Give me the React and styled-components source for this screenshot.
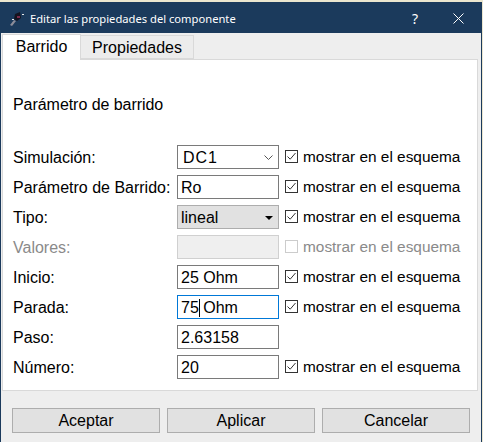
import React from 'react';
import styled, { createGlobalStyle } from 'styled-components';

const GlobalStyle = createGlobalStyle`
  html, body { margin: 0; padding: 0; background: #ebe6cf; }
  body { width: 483px; height: 442px; overflow: hidden; font-family: "Liberation Sans", Arial, sans-serif; }
`;

const Dialog = styled.div`
  margin-top: 2px;
  width: 482px;
  height: 440px;
  box-sizing: border-box;
  border-left: 1px solid #1b3a5c;
  border-right: 1px solid #1b3a5c;
  background: #eeeeee;
  display: flex;
  flex-direction: column;
`;

const TitleBar = styled.div`
  height: 31px;
  flex: none;
  background: #1b3a5c;
  color: #fff;
  display: flex;
  align-items: center;
  padding: 2px 17px 0 8px;
  box-sizing: border-box;
  font-family: "Noto Sans", sans-serif;
  font-size: 11.2px;
`;

const TitleText = styled.span`
  margin-left: 5px;
  flex: 1;
`;

const HelpMark = styled.span`
  font-size: 14px;
  margin-right: 35px;
`;

const TabStrip = styled.div`
  display: flex;
  align-items: flex-end;
  height: 26px;
  flex: none;
  padding-left: 1px;
`;

const Tab = styled.div`
  box-sizing: border-box;
  font-size: 16px;
  text-align: center;
  color: #000;
  width: ${p => p.$width}px;
  height: ${p => (p.$active ? 26 : 24)}px;
  background: ${p => (p.$active ? '#fff' : '#ececec')};
  border: 1px solid #d9d9d9;
  border-bottom: ${p => (p.$active ? 'none' : '1px solid #d9d9d9')};
  border-left: ${p => (p.$active ? '1px solid #d9d9d9' : 'none')};
  line-height: 24px;
  position: relative;
  z-index: ${p => (p.$active ? 1 : 0)};
  margin-bottom: ${p => (p.$active ? -1 : 0)}px;
`;

const Pane = styled.div`
  box-sizing: border-box;
  margin: 0 3px 0 1px;
  height: 332px;
  flex: none;
  background: #fff;
  border: 1px solid #d9d9d9;
  padding: 0 10px;
`;

const Heading = styled.div`
  font-size: 16px;
  letter-spacing: -0.05px;
  color: #000;
  margin: 36px 0 31px;
  line-height: 18px;
`;

const Form = styled.div`
  display: grid;
  grid-template-columns: 164px 102px 1fr;
  grid-auto-rows: 24px;
  row-gap: 6px;
  align-items: center;
  font-size: 16px;
`;

const Label = styled.div`
  align-self: start;
  padding-top: 1px;
  line-height: 23px;
  white-space: nowrap;
  color: ${p => (p.$disabled ? '#8a8a8a' : '#000')};
`;

const Field = styled.div`
  box-sizing: border-box;
  height: 24px;
  display: flex;
  align-items: center;
  padding: 1px 0 0 3px;
  background: ${p => (p.$disabled ? '#efefef' : '#fff')};
  border: 1px solid ${p => (p.$focus ? '#0078d7' : p.$disabled ? '#d0d0d0' : '#7a7a7a')};
  font-size: 16px;
  white-space: pre;
`;

const Caret = styled.span`
  display: inline-block;
  width: 1px;
  height: 18px;
  background: #000;
  margin: 0 -1px 0 0;
`;

const ComboFlat = styled(Field)`
  justify-content: space-between;
  padding: 1px 5px 0 5px;
  letter-spacing: 1px;
`;

const ComboRaised = styled(Field)`
  justify-content: space-between;
  padding: 1px 5px 0 3px;
  background: #e1e1e1;
  border-color: #adadad;
`;

const Arrow = styled.span`
  width: 0;
  height: 0;
  border-left: 4px solid transparent;
  border-right: 4px solid transparent;
  border-top: 4px solid #000;
`;

const ShowCell = styled.div`
  display: flex;
  align-items: center;
  margin-left: 6px;
  font-size: 15.4px;
  white-space: nowrap;
  color: ${p => (p.$disabled ? '#8a8a8a' : '#000')};
`;

const Box = styled.span`
  box-sizing: border-box;
  width: 13px;
  height: 13px;
  flex: none;
  margin: -1px 5px 0 0;
  display: flex;
  background: #fff;
  border: 1px solid ${p => (p.$disabled ? '#cccccc' : '#333')};
`;

const Footer = styled.div`
  display: grid;
  grid-template-columns: repeat(3, 148px);
  column-gap: 7px;
  padding: 17px 0 0 11px;
`;

const Button = styled.div`
  box-sizing: border-box;
  height: 25px;
  background: #e1e1e1;
  border: 1px solid #adadad;
  font-size: 16px;
  text-align: center;
  line-height: 23px;
  color: #000;
`;

const Glyph = () => (
  <svg width="16" height="16" viewBox="0 0 16 16">
    <path d="M1 14 L5 9 L7 10 L3 15Z" fill="#8d8d9a" />
    <path d="M6 3 L11 1 L12 7 L8 10 L5 8Z" fill="#141420" />
    <path d="M8 5h3v2H8z" fill="#7a2a4a" />
    <path d="M13 3h2v1h-2zM3 8h2v1H3z" fill="#e8e8e8" />
  </svg>
);

const CloseIcon = () => (
  <svg width="11" height="11" viewBox="0 0 11 11">
    <path d="M0.5 0.5 L10.5 10.5 M10.5 0.5 L0.5 10.5" stroke="#fff" strokeWidth="1" />
  </svg>
);

const Chevron = () => (
  <svg width="9" height="5" viewBox="0 0 9 5">
    <path d="M0.5 0.5 L4.5 4.5 L8.5 0.5" stroke="#555" fill="none" />
  </svg>
);

const Tick = () => (
  <svg width="11" height="11" viewBox="0 0 11 11">
    <path d="M1.5 5.5 L4.2 8.2 L9.5 2" stroke="#333" fill="none" />
  </svg>
);

function ShowInSchematic({ disabled }) {
  return (
    <ShowCell $disabled={disabled}>
      <Box $disabled={disabled}>{!disabled && <Tick />}</Box>
      mostrar en el esquema
    </ShowCell>
  );
}

export default function App() {
  return (
    <>
      <GlobalStyle />
      <Dialog>
        <TitleBar>
          <Glyph />
          <TitleText>Editar las propiedades del componente</TitleText>
          <HelpMark>?</HelpMark>
          <CloseIcon />
        </TitleBar>
        <TabStrip>
          <Tab $active $width={79}>Barrido</Tab>
          <Tab $width={113}>Propiedades</Tab>
        </TabStrip>
        <Pane>
          <Heading>Parámetro de barrido</Heading>
          <Form>
            <Label>Simulación:</Label>
            <ComboFlat>DC1<Chevron /></ComboFlat>
            <ShowInSchematic />

            <Label>Parámetro de Barrido:</Label>
            <Field>Ro</Field>
            <ShowInSchematic />

            <Label>Tipo:</Label>
            <ComboRaised>lineal<Arrow /></ComboRaised>
            <ShowInSchematic />

            <Label $disabled>Valores:</Label>
            <Field $disabled />
            <ShowInSchematic disabled />

            <Label>Inicio:</Label>
            <Field>25 Ohm</Field>
            <ShowInSchematic />

            <Label>Parada:</Label>
            <Field $focus>75<Caret /> Ohm</Field>
            <ShowInSchematic />

            <Label>Paso:</Label>
            <Field>2.63158</Field>
            <span />

            <Label>Número:</Label>
            <Field>20</Field>
            <ShowInSchematic />
          </Form>
        </Pane>
        <Footer>
          <Button>Aceptar</Button>
          <Button>Aplicar</Button>
          <Button>Cancelar</Button>
        </Footer>
      </Dialog>
    </>
  );
}
